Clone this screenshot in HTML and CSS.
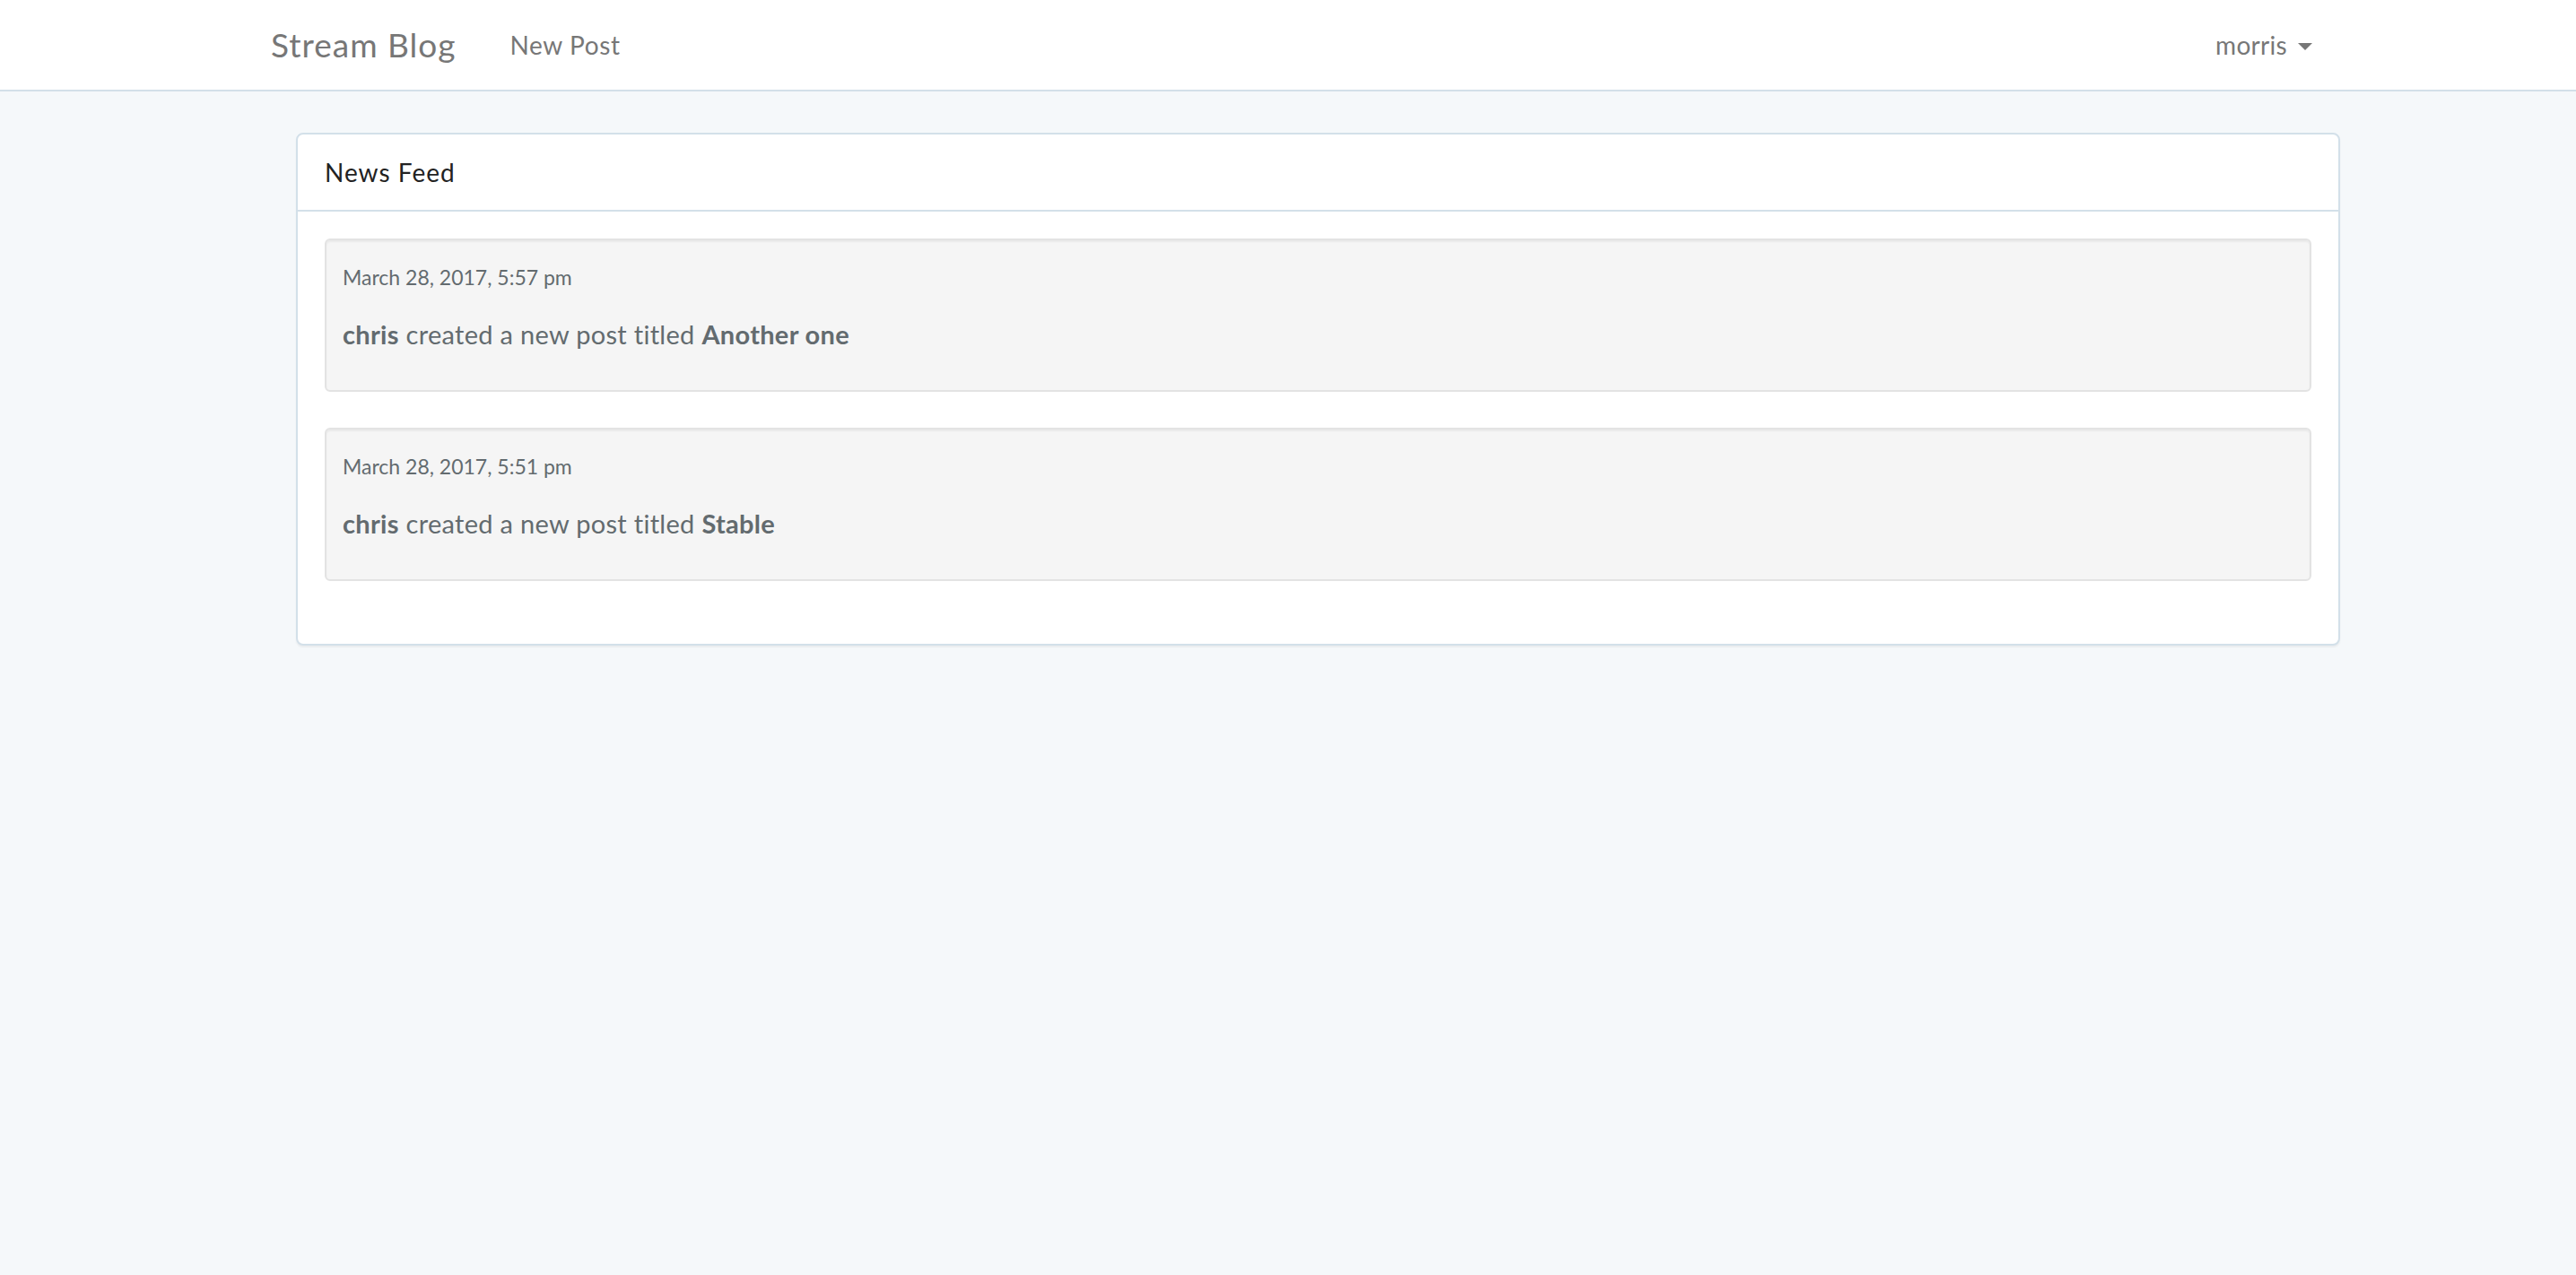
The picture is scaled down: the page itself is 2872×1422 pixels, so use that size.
FILE: index.html
```html
<!DOCTYPE html>
<html lang="en">
<head>
<meta charset="utf-8">
<title>Stream Blog</title>
<link rel="stylesheet" href="styles.css">
</head>
<body>
<nav class="navbar">
  <div class="nav-inner">
    <a class="brand" href="#">Stream Blog</a>
    <ul class="nav-links">
      <li><a href="#">New Post</a></li>
    </ul>
    <div class="nav-right">
      <a class="user" href="#">morris <span class="caret"></span></a>
    </div>
  </div>
</nav>
<main class="main">
  <section class="panel">
    <div class="panel-heading">News Feed</div>
    <div class="panel-body">
      <div class="well">
        <p class="date">March 28, 2017, 5:57 pm</p>
        <p class="activity"><strong>chris</strong> created a new post titled <strong>Another one</strong></p>
      </div>
      <div class="well">
        <p class="date">March 28, 2017, 5:51 pm</p>
        <p class="activity"><strong>chris</strong> created a new post titled <strong>Stable</strong></p>
      </div>
    </div>
  </section>
</main>
</body>
</html>
```

FILE: styles.css
```css
* { box-sizing: border-box; }
html, body { margin: 0; padding: 0; }
body {
  background: #f5f8fa;
  font-family: Lato, "Open Sans", "Liberation Sans", sans-serif;
  color: #636b6f;
  font-size: 28px;
  line-height: 1.6;
  min-height: 1422px;
}
a { text-decoration: none; }

.navbar {
  background: #fff;
  border-bottom: 2px solid #d3e0e9;
  height: 102px;
}
.nav-inner {
  width: 2284px;
  margin: 0 auto;
  height: 100px;
  display: flex;
  align-items: center;
}
.brand {
  font-size: 37px;
  letter-spacing: 1px;
  color: #777;
  padding-left: 8px;
  padding-right: 60px;
}
.nav-links {
  list-style: none;
  margin: 0;
  padding: 0;
  display: flex;
}
.nav-links a {
  color: #777;
  font-size: 28px;
  letter-spacing: 0.6px;
}
.nav-right { margin-left: auto; }
.user {
  color: #777;
  font-size: 28px;
  letter-spacing: 0.3px;
  display: flex;
  align-items: center;
}
.caret {
  display: inline-block;
  width: 0;
  height: 0;
  margin-left: 12px;
  margin-top: 4px;
  border-top: 8px solid #777;
  border-left: 8px solid transparent;
  border-right: 8px solid transparent;
}

.main {
  width: 2279px;
  margin: 46px 0 0 calc(50% - 1106px);
}
.panel {
  background: #fff;
  border: 2px solid #d3e0e9;
  border-radius: 8px;
  box-shadow: 0 2px 2px rgba(0, 0, 0, 0.05);
}
.panel-heading {
  padding: 20px 30px;
  height: 86px;
  border-bottom: 2px solid #d3e0e9;
  color: #222;
  font-size: 28px;
  letter-spacing: 1px;
  line-height: 44px;
}
.panel-body {
  padding: 30px 30px 30px;
}
.well {
  background: #f5f5f5;
  border: 2px solid #e3e3e3;
  border-radius: 6px;
  box-shadow: inset 0 2px 2px rgba(0, 0, 0, 0.05);
  padding: 19px 18px 18px;
  margin-bottom: 40px;
  height: 171px;
}
.date {
  margin: 0 0 20px;
  font-size: 23px;
  line-height: 44px;
  color: #636b6f;
}
.activity {
  margin: 0;
  font-size: 29px;
  letter-spacing: 0.3px;
  line-height: 44px;
}
.activity strong { font-weight: 700; }
```
